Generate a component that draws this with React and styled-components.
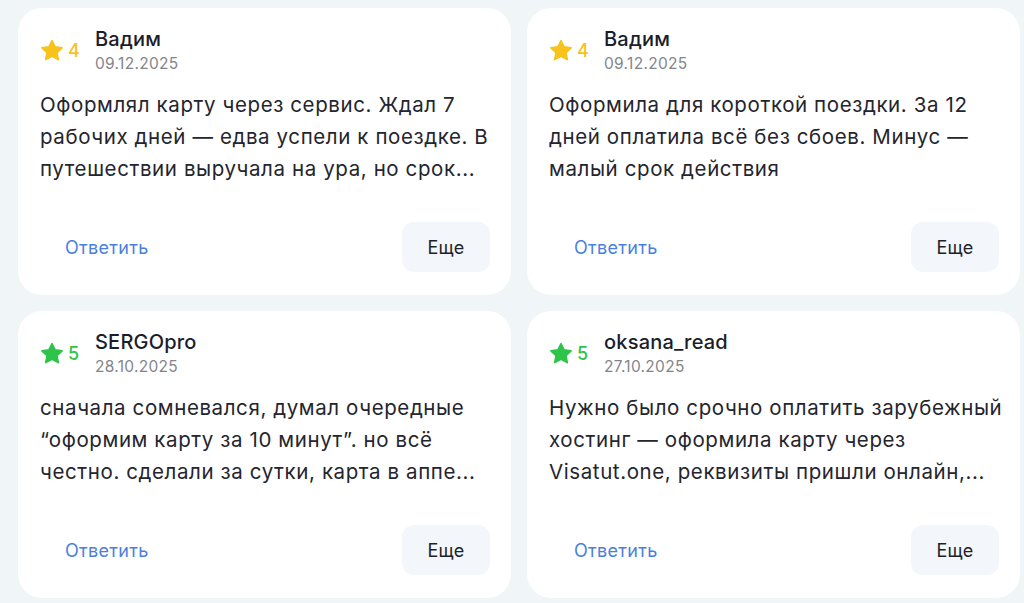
import React from 'react';
import styled, { createGlobalStyle } from 'styled-components';

const PREVIEW_LIMIT = 112;

const reviews = [
  {
    name: 'Вадим',
    date: '09.12.2025',
    rating: 4,
    text: 'Оформлял карту через сервис. Ждал 7 рабочих дней — едва успели к поездке. В путешествии выручала на ура, но срок ожидания мог бы быть и поменьше.',
  },
  {
    name: 'Вадим',
    date: '09.12.2025',
    rating: 4,
    text: 'Оформила для короткой поездки. За 12 дней оплатила всё без сбоев. Минус — малый срок действия',
  },
  {
    name: 'SERGOpro',
    date: '28.10.2025',
    rating: 5,
    text: 'сначала сомневался, думал очередные “оформим карту за 10 минут”. но всё честно. сделали за сутки, карта в аппе появилась сразу, платил без проблем.',
  },
  {
    name: 'oksana_read',
    date: '27.10.2025',
    rating: 5,
    text: 'Нужно было срочно оплатить зарубежный хостинг — оформила карту через Visatut.one, реквизиты пришли онлайн, оплатила хостинг за пару минут.',
  },
];

// cut on a word boundary, like the preview on the site
const preview = (text) => {
  if (text.length <= PREVIEW_LIMIT) return text;
  let out = '';
  for (const word of text.split(' ')) {
    const next = out ? `${out} ${word}` : word;
    if (next.length > PREVIEW_LIMIT) break;
    out = next;
  }
  return `${out}...`;
};

const GlobalStyle = createGlobalStyle`
  html, body {
    margin: 0;
    background: #f0f5f7;
  }
  body {
    font-family: Inter, "Noto Sans", sans-serif;
    -webkit-font-smoothing: antialiased;
  }
`;

const Grid = styled.div`
  display: grid;
  grid-template-columns: 1fr 1fr;
  gap: 16px;
  padding: 8px 4px 6px 18px;
`;

const Card = styled.article`
  background: #fff;
  border-radius: 24px;
  height: 287px;
  box-sizing: border-box;
  padding: 22px 21px 23px 22px;
  display: flex;
  flex-direction: column;
`;

const Header = styled.div`
  display: flex;
  align-items: flex-start;
`;

const Rating = styled.div`
  display: flex;
  align-items: center;
  gap: 4px;
  margin-top: 9px;
  width: 55px;
  font-size: 18px;
  font-weight: 500;
  color: ${(p) => (p.$value >= 5 ? '#2ec44a' : '#f7c21a')};
`;

const Author = styled.div`
  display: flex;
  flex-direction: column;
`;

const Name = styled.div`
  font-size: 20px;
  font-weight: 500;
  letter-spacing: 0.2px;
  color: #1b1d2b;
  line-height: 22px;
  margin-top: -2px;
`;

const DateText = styled.div`
  font-size: 15.5px;
  letter-spacing: 0.3px;
  color: #84858c;
  line-height: 20px;
  margin-top: 4px;
`;

const Body = styled.p`
  margin: 15px -10px 0 0;
  font-size: 20.5px;
  letter-spacing: 0.6px;
  line-height: 32px;
  color: #24252e;
  display: -webkit-box;
  -webkit-line-clamp: 3;
  -webkit-box-orient: vertical;
  overflow: hidden;
`;

const Footer = styled.div`
  margin-top: auto;
  display: flex;
  justify-content: space-between;
  align-items: center;
`;

const ReplyButton = styled.button`
  border: none;
  background: none;
  height: 50px;
  padding: 0 25px;
  font: inherit;
  font-size: 18px;
  letter-spacing: 0.3px;
  color: #4a7fe0;
  cursor: pointer;
`;

const MoreButton = styled.button`
  border: none;
  background: #f3f6fb;
  border-radius: 12px;
  width: 88px;
  height: 50px;
  font: inherit;
  font-size: 18px;
  letter-spacing: 0.3px;
  color: #1e1f29;
  cursor: pointer;
`;

const Star = ({ color }) => (
  <svg width="24" height="23" viewBox="0 0 24 23">
    <path
      d="M12 1.5l3.1 6.4 7 .9-5.1 4.8 1.3 7L12 17.2l-6.3 3.4 1.3-7L1.9 8.8l7-.9z"
      fill={color}
      stroke={color}
      strokeWidth="1.6"
      strokeLinejoin="round"
    />
  </svg>
);

const ReviewCard = ({ review }) => (
  <Card>
    <Header>
      <Rating $value={review.rating}>
        <Star color={review.rating >= 5 ? '#2ec44a' : '#f7c21a'} />
        {review.rating}
      </Rating>
      <Author>
        <Name>{review.name}</Name>
        <DateText>{review.date}</DateText>
      </Author>
    </Header>
    <Body>{preview(review.text)}</Body>
    <Footer>
      <ReplyButton>Ответить</ReplyButton>
      <MoreButton>Еще</MoreButton>
    </Footer>
  </Card>
);

export default function App() {
  return (
    <>
      <GlobalStyle />
      <Grid>
        {reviews.map((r, i) => (
          <ReviewCard key={i} review={r} />
        ))}
      </Grid>
    </>
  );
}
